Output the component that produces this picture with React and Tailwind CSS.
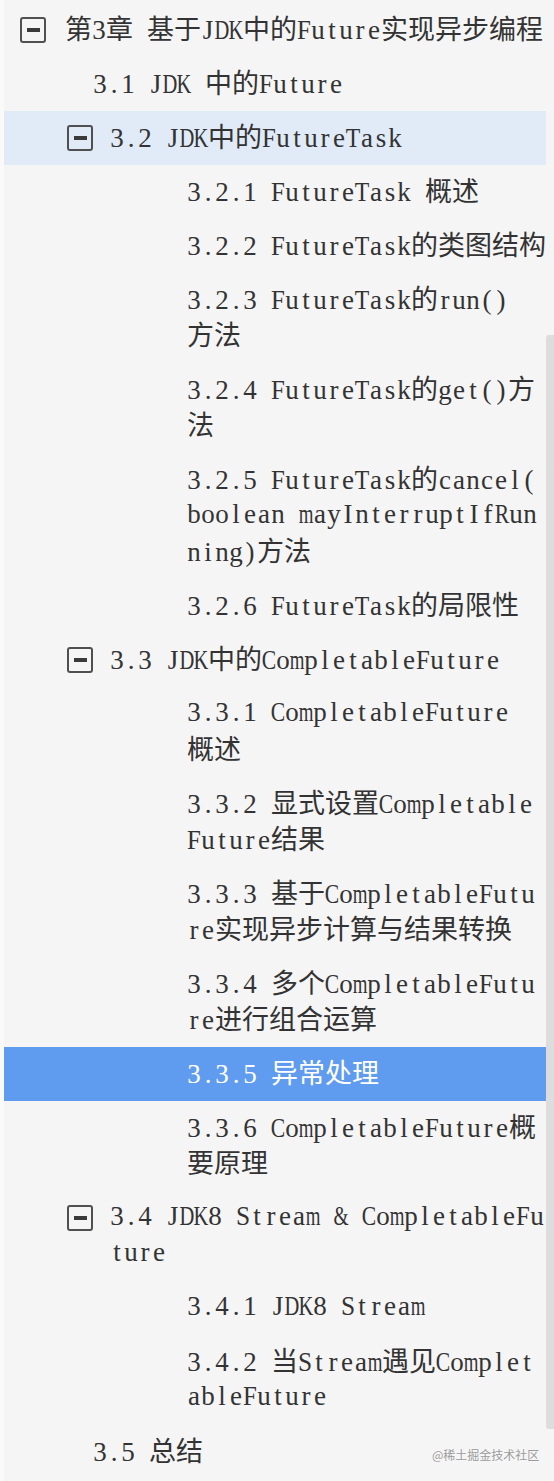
import React from 'react';

// table of contents, one entry per row; lines are broken where the reference breaks them
const items = [
  { level: 0, icon: true, lines: ['第3章 基于JDK中的Future实现异步编程'] },
  { level: 1, lines: ['3.1 JDK 中的Future'] },
  { level: 1, icon: true, active: 'light', lines: ['3.2 JDK中的FutureTask'] },
  { level: 2, lines: ['3.2.1 FutureTask 概述'] },
  { level: 2, lines: ['3.2.2 FutureTask的类图结构'] },
  { level: 2, lines: ['3.2.3 FutureTask的run()', '方法'] },
  { level: 2, lines: ['3.2.4 FutureTask的get()方', '法'] },
  { level: 2, lines: ['3.2.5 FutureTask的cancel(', 'boolean mayInterruptIfRun', 'ning)方法'] },
  { level: 2, lines: ['3.2.6 FutureTask的局限性'] },
  { level: 1, icon: true, lines: ['3.3 JDK中的CompletableFuture'] },
  { level: 2, lines: ['3.3.1 CompletableFuture', '概述'] },
  { level: 2, lines: ['3.3.2 显式设置Completable', 'Future结果'] },
  { level: 2, lines: ['3.3.3 基于CompletableFutu', 're实现异步计算与结果转换'] },
  { level: 2, lines: ['3.3.4 多个CompletableFutu', 're进行组合运算'] },
  { level: 2, active: 'blue', lines: ['3.3.5 异常处理'] },
  { level: 2, lines: ['3.3.6 CompletableFuture概', '要原理'] },
  { level: 1, icon: true, lines: ['3.4 JDK8 Stream & CompletableFu', 'ture'] },
  { level: 2, lines: ['3.4.1 JDK8 Stream'] },
  { level: 2, lines: ['3.4.2 当Stream遇见Complet', 'ableFuture'] },
  { level: 1, lines: ['3.5 总结'] },
];

const CJK = /([\u3000-\u9fff\uff00-\uffef]+)/;

// the reference uses a serif font with fixed half-width cells; squeeze the wide Times letters into them
const squeeze = {
  m: 'scale-x-[0.7]',
  w: 'scale-x-[0.74]',
  M: 'scale-x-[0.6]',
  W: 'scale-x-[0.6]',
  C: 'scale-x-[0.8]',
  D: 'scale-x-[0.76]',
  K: 'scale-x-[0.76]',
  R: 'scale-x-[0.8]',
  U: 'scale-x-[0.74]',
  '&': 'scale-x-[0.72]',
  T: 'scale-x-[0.88]',
  F: 'scale-x-[0.92]',
  S: 'scale-x-[0.94]',
};

function Text({ value }) {
  return value
    .split(CJK)
    .filter(Boolean)
    .map((part, i) =>
      CJK.test(part) ? (
        <span key={i} className="font-['Noto_Sans_CJK_SC',sans-serif] text-[27px]">
          {part}
        </span>
      ) : (
        <span key={i} className="font-['Liberation_Serif',serif] text-[27px]">
          {[...part].map((ch, j) => (
            <span key={j} className={`inline-flex w-[14px] justify-center ${squeeze[ch] || ''}`}>
              {ch === ' ' ? '\u00a0' : ch}
            </span>
          ))}
        </span>
      )
    );
}

function MinusBox() {
  return (
    <div className="w-[26px] h-[26px] shrink-0 rounded-[3px] border-2 border-[#505050] flex items-center justify-center">
      <div className="w-[13px] h-1 bg-[#3a3a3a]" />
    </div>
  );
}

function Row({ item }) {
  let pad = 'pl-[183px]';
  if (item.level === 0) pad = 'pl-4';
  else if (item.level === 1) pad = item.icon ? 'pl-[63px]' : 'pl-[89px]';

  let tone = 'text-[#333]';
  if (item.active === 'light') tone = 'bg-[#e1ebf8] text-[#333]';
  if (item.active === 'blue') tone = 'bg-[#5f9bef] text-white';

  return (
    <div className={`flex items-start pt-[7px] pb-[11px] ${pad} ${tone}`}>
      {item.icon && (
        <div className={`h-9 flex items-center translate-y-[2px] ${item.level === 0 ? 'mr-[19px]' : 'mr-[17px]'}`}>
          <MinusBox />
        </div>
      )}
      <div className="flex flex-col">
        {item.lines.map((line) => (
          <div key={line} className="h-9 leading-9 whitespace-nowrap">
            <Text value={line} />
          </div>
        ))}
      </div>
    </div>
  );
}

export default function App() {
  return (
    <div className="w-[554px] h-[1481px] bg-[#fafafa] relative overflow-hidden">
      <div className="ml-1 h-full bg-[#f5f5f5] pt-[3px] pr-2">
        {items.map((item, i) => (
          <Row key={i} item={item} />
        ))}
      </div>

      {/* scrollbar thumb */}
      <div className="absolute right-0 top-[335px] w-2 h-[1094px] bg-[#dddddd] rounded-l-[3px]" />

      {/* watermark */}
      <div className="absolute left-[432px] top-[1447px] text-[12px] leading-4 text-[#9a9a9a] font-['Noto_Sans_CJK_SC',sans-serif] [text-shadow:0_0_2px_#fff]">
        @稀土掘金技术社区
      </div>
    </div>
  );
}
